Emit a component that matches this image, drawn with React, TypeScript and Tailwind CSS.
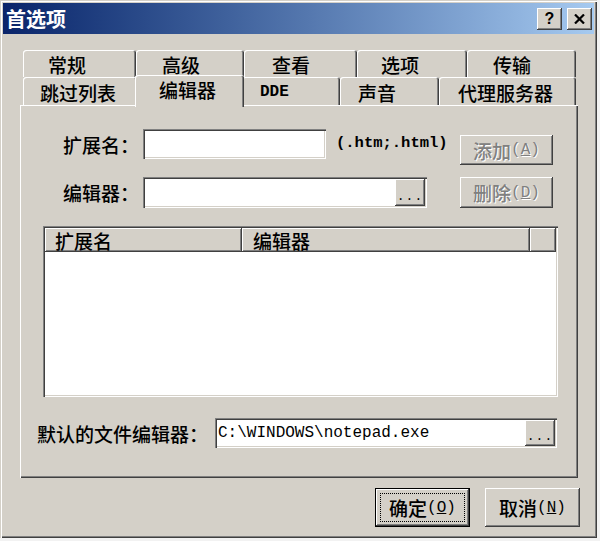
import React from "react";

const raised =
  "shadow-[inset_-1px_-1px_#404040,inset_1px_1px_#ffffff,inset_-2px_-2px_#808080,inset_2px_2px_#d4d0c8]";
const sunken =
  "shadow-[inset_1px_1px_#808080,inset_2px_2px_#404040,inset_-1px_-1px_#ffffff,inset_-2px_-2px_#d4d0c8]";

type TabProps = { label: string; w: string; pl: string; mono?: boolean; selected?: boolean };

const Tab = ({ label, w, pl, mono, selected }: TabProps) => (
  <div
    className={`${w} ${pl} ${
      selected ? "relative z-10 -mx-[2px] -mt-[2px] h-[32px] pb-[4px]" : "h-full pt-[2px]"
    } flex items-center rounded-t-[3px] bg-[#d4d0c8] shadow-[inset_1px_1px_#ffffff,inset_-1px_0_#404040,inset_-2px_0_#808080]`}
  >
    {mono ? (
      <span className="font-['Liberation_Mono',monospace] text-[16px] font-bold leading-none">{label}</span>
    ) : (
      <span className="text-[19px] leading-none">{label}</span>
    )}
  </div>
);

const Browse = () => (
  <div className={`w-[30px] h-full bg-[#d4d0c8] ${raised} flex items-end justify-center pb-[3px]`}>
    <span className="font-['Liberation_Mono',monospace] text-[13px] leading-none tracking-[1px]">...</span>
  </div>
);

const Key = ({ k }: { k: string }) => (
  <span className="font-['Liberation_Mono',monospace] text-[16px]">
    (<span className="underline">{k}</span>)
  </span>
);

const DisabledButton = ({ text, k, h }: { text: string; k: string; h: string }) => (
  <div
    className={`w-[93px] ${h} bg-[#d4d0c8] ${raised} flex items-center justify-center text-[#808080] [text-shadow:1px_1px_#ffffff] leading-none`}
  >
    <span className="text-[19px]">{text}</span>
    <Key k={k} />
  </div>
);

const HeaderCell = ({ w, pl, label }: { w: string; pl: string; label?: string }) => (
  <div className={`${w} ${pl} h-full bg-[#d4d0c8] ${raised} flex items-center text-[19px] leading-none`}>
    {label}
  </div>
);

export default function App() {
  return (
    <div className="w-[600px] h-[541px] bg-[#f2f2f2] overflow-hidden font-['Noto_Sans_CJK_SC',sans-serif] font-medium text-black">
      <div className="w-[597px] h-[538px] p-[3px] flex flex-col bg-[#d4d0c8] shadow-[inset_1px_1px_#d4d0c8,inset_2px_2px_#ffffff,inset_-1px_-1px_#404040,inset_-2px_-2px_#808080]">
        {/* title bar */}
        <div className="h-[31px] flex items-center justify-between pl-[3px] pr-[2px] bg-linear-to-r from-[#0a246a] to-[#a6caf0]">
          <span className="text-[20px] font-bold leading-none text-white">首选项</span>
          <div className="flex gap-[5px]">
            <div className={`w-[25px] h-[22px] bg-[#d4d0c8] ${raised} flex items-center justify-center`}>
              <span className="font-['Liberation_Sans',sans-serif] text-[16px] font-bold leading-none">?</span>
            </div>
            <div className={`w-[25px] h-[22px] bg-[#d4d0c8] ${raised} flex items-center justify-center`}>
              <svg width="11" height="10" viewBox="0 0 11 10">
                <path d="M1 0.5 L10 9.5 M10 0.5 L1 9.5" stroke="#000" strokeWidth="2.2" />
              </svg>
            </div>
          </div>
        </div>

        {/* tab control */}
        <div className="mt-[16px] ml-[17px] w-[558px] flex flex-col">
          <div className="flex h-[27px] pl-[3px]">
            <Tab label="常规" w="w-[113px]" pl="pl-[25px]" />
            <Tab label="高级" w="w-[108px]" pl="pl-[26px]" />
            <Tab label="查看" w="w-[113px]" pl="pl-[28px]" />
            <Tab label="选项" w="w-[110px]" pl="pl-[24px]" />
            <Tab label="传输" w="w-[109px]" pl="pl-[26px]" />
          </div>
          <div className="flex h-[28px] pl-[3px]">
            <Tab label="跳过列表" w="w-[114px]" pl="pl-[17px]" />
            <Tab label="编辑器" w="w-[109px]" pl="pl-[24px]" selected />
            <Tab label="DDE" w="w-[98px]" pl="pl-[18px]" mono />
            <Tab label="声音" w="w-[99px]" pl="pl-[18px]" />
            <Tab label="代理服务器" w="w-[137px]" pl="pl-[19px]" />
          </div>

          {/* panel */}
          <div className="h-[373px] w-[558px] flex flex-col shadow-[inset_1px_1px_#ffffff,inset_-1px_-1px_#404040,inset_-2px_-2px_#808080]">
            <div className="flex pt-[24px]">
              <div className="ml-[43px] flex flex-col gap-[18px]">
                <div className="flex items-center h-[30px]">
                  <span className="w-[80px] text-[19px] leading-none">扩展名：</span>
                  <div className={`w-[183px] h-full bg-white ${sunken}`} />
                  <span className="ml-[10px] font-['Liberation_Mono',monospace] text-[15.5px] font-bold leading-none">
                    (.htm;.html)
                  </span>
                </div>
                <div className="flex items-center h-[31px]">
                  <span className="w-[80px] text-[19px] leading-none">编辑器：</span>
                  <div className={`w-[284px] h-full bg-white ${sunken} flex justify-end p-[2px]`}>
                    <Browse />
                  </div>
                </div>
              </div>
              <div className="ml-auto mr-[25px] mt-[6px] flex flex-col gap-[12px]">
                <DisabledButton text="添加" k="A" h="h-[30px]" />
                <DisabledButton text="删除" k="D" h="h-[31px]" />
              </div>
            </div>

            {/* list view */}
            <div className={`ml-[23px] mt-[18px] w-[515px] h-[171px] bg-white ${sunken} p-[2px] flex flex-col`}>
              <div className="flex h-[24px]">
                <HeaderCell w="w-[197px]" pl="pl-[10px]" label="扩展名" />
                <HeaderCell w="w-[288px]" pl="pl-[11px]" label="编辑器" />
                <HeaderCell w="flex-1" pl="pl-0" />
              </div>
            </div>

            {/* default editor */}
            <div className="mt-[21px] ml-[17px] flex items-center h-[30px]">
              <span className="text-[19px] leading-none">默认的文件编辑器：</span>
              <div className={`ml-[7px] w-[342px] h-full bg-white ${sunken} flex items-center justify-between p-[2px]`}>
                <span className="pl-[1px] font-['Liberation_Mono',monospace] text-[16px] font-normal leading-none">
                  C:\WINDOWS\notepad.exe
                </span>
                <Browse />
              </div>
            </div>
          </div>
        </div>

        {/* dialog buttons */}
        <div className="mt-[10px] mr-[14px] flex justify-end gap-[15px]">
          <div className="w-[95px] h-[39px] border border-black">
            <div className={`w-full h-full bg-[#d4d0c8] ${raised} p-[4px] flex`}>
              <div className="flex-1 border border-dotted border-black flex items-center justify-center leading-none">
                <span className="text-[19px]">确定</span>
                <Key k="O" />
              </div>
            </div>
          </div>
          <div className={`w-[95px] h-[39px] bg-[#d4d0c8] ${raised} flex items-center justify-center leading-none`}>
            <span className="text-[19px]">取消</span>
            <Key k="N" />
          </div>
        </div>
      </div>
    </div>
  );
}
